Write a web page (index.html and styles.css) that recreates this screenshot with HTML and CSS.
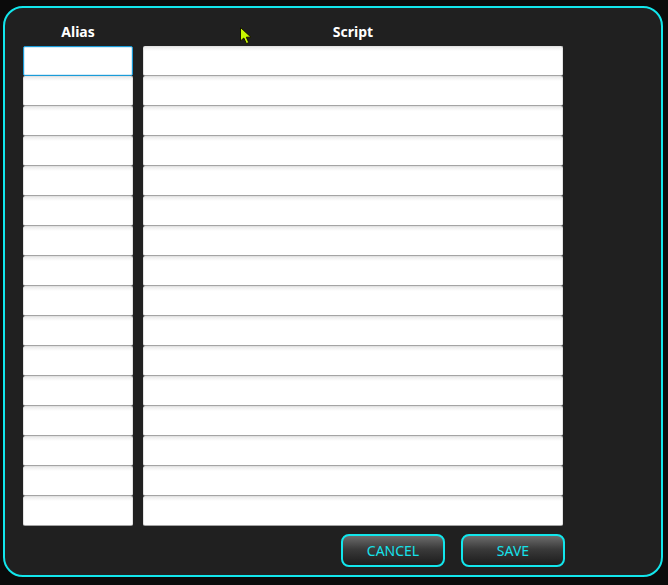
FILE: index.html
```html
<!DOCTYPE html>
<html>
<head>
<meta charset="utf-8">
<link rel="stylesheet" href="styles.css">
</head>
<body>
<div class="panel">
  <div class="grid">
    <div class="head">Alias</div>
    <div class="head">Script</div>
    <input class="box focus"><input class="box">
    <input class="box"><input class="box">
    <input class="box"><input class="box">
    <input class="box"><input class="box">
    <input class="box"><input class="box">
    <input class="box"><input class="box">
    <input class="box"><input class="box">
    <input class="box"><input class="box">
    <input class="box"><input class="box">
    <input class="box"><input class="box">
    <input class="box"><input class="box">
    <input class="box"><input class="box">
    <input class="box"><input class="box">
    <input class="box"><input class="box">
    <input class="box"><input class="box">
    <input class="box"><input class="box">
  </div>
  <div class="actions">
    <button class="btn">CANCEL</button>
    <button class="btn">SAVE</button>
  </div>
</div>
<svg class="cursor" width="13" height="18" viewBox="0 0 13 18">
  <path d="M0.5 0.5 L0.5 14 L3.8 11 L6.4 16.6 L8.8 15.6 L6.3 10.2 L11 10.2 Z" fill="#c8f800" stroke="#151500" stroke-width="1"/>
</svg>
</body>
</html>
```
FILE: styles.css
```css
html, body {
  margin: 0;
  padding: 0;
  background: #0b0b0b;
  width: 668px;
  height: 585px;
  overflow: hidden;
  font-family: "Noto Sans", "Open Sans", sans-serif;
}
.panel {
  position: relative;
  box-sizing: border-box;
  margin: 6px 0 0 3px;
  width: 660px;
  height: 571px;
  border: 2px solid #12e6ec;
  border-radius: 20px;
  background: #202020;
  padding: 14px 0 0 18px;
}
.grid {
  display: grid;
  grid-template-columns: 110px 420px;
  column-gap: 10px;
}
.head {
  color: #fff;
  font-weight: bold;
  font-size: 14px;
  line-height: 20px;
  height: 24px;
  text-align: center;
}
.box {
  display: block;
  box-sizing: border-box;
  width: 100%;
  height: 30px;
  margin: 0;
  padding: 0;
  border: 1px solid #e2e2e2;
  border-bottom-color: #a4a4a4;
  border-radius: 2px;
  background: linear-gradient(#ececec 0, #fff 4px);
  outline: none;
}
.box.focus {
  border: 1px solid #1a9bd8;
  box-shadow: inset 0 0 0 1px #d3ecf8;
  background: #fff;
}
.actions {
  display: flex;
  justify-content: flex-end;
  gap: 16px;
  width: 542px;
  margin-top: 8px;
}
.btn {
  box-sizing: border-box;
  width: 104px;
  height: 33px;
  border: 2px solid #12e6ec;
  border-radius: 8px;
  background: linear-gradient(#6c6c6c 0%, #3a3a3a 45%, #1c1c1c 100%);
  color: #16e2ea;
  font-family: "Noto Sans", "Open Sans", sans-serif;
  font-size: 14px;
  padding: 0;
}
.cursor {
  position: absolute;
  left: 240px;
  top: 27px;
}
```
